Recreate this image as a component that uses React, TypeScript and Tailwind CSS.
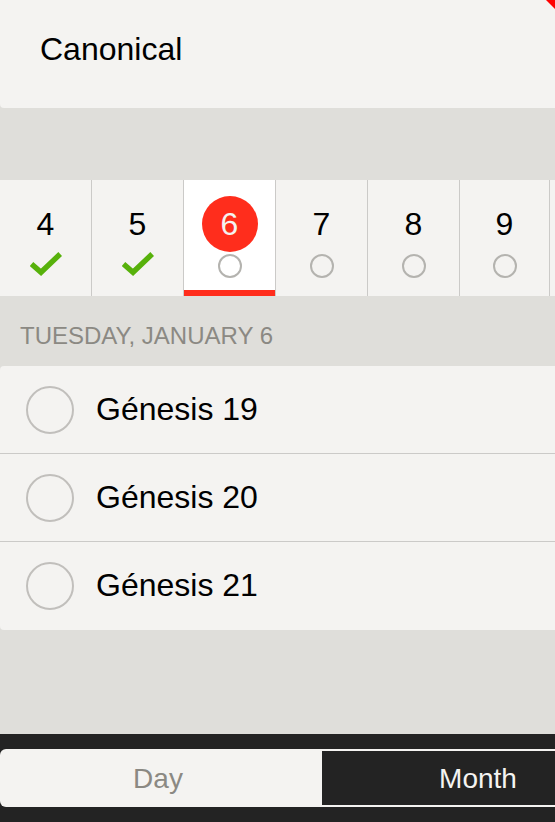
import { useState } from 'react';

type Day = { date: number; done: boolean };

const days: Day[] = [
  { date: 4, done: true },
  { date: 5, done: true },
  { date: 6, done: false },
  { date: 7, done: false },
  { date: 8, done: false },
  { date: 9, done: false },
];

const chapters = ['Génesis 19', 'Génesis 20', 'Génesis 21'];

function Check() {
  return (
    <svg viewBox="0 0 32 24" className="h-6 w-8" fill="none" aria-hidden="true">
      <path d="M1.5 12 L11 20.3 L30.2 2" stroke="#57b10b" strokeWidth="5.4" />
    </svg>
  );
}

function DayCell({ day, selected, onSelect }: { day: Day; selected: boolean; onSelect: () => void }) {
  return (
    <button
      type="button"
      aria-pressed={selected}
      onClick={onSelect}
      className={`flex w-23 shrink-0 flex-col items-center border-r border-[#cbcac8] pt-4 last:w-[90px] ${
        selected ? 'bg-white' : 'bg-[#f4f3f1]'
      }`}
    >
      <span
        className={`flex size-14 items-center justify-center rounded-full text-[32px] leading-10 ${
          selected ? 'bg-[#ff2d1c] text-[#f4f3f1]' : 'text-black'
        }`}
      >
        {day.date}
      </span>
      {day.done ? <Check /> : <span className="mt-0.5 size-6 rounded-full border-2 border-[#b4b3af]" />}
      {selected && <span className="mt-auto h-1.5 w-full bg-[#ff2d1c]" />}
    </button>
  );
}

export default function App() {
  const [selected, setSelected] = useState(6);

  return (
    <div className="flex min-h-screen flex-col overflow-hidden bg-[#dfdeda] font-['Liberation_Sans',Arial,sans-serif] text-black">
      <header className="relative overflow-hidden rounded-bl bg-[#f4f3f1] px-10 pt-[29px] pb-[39px]">
        <h1 className="text-[32px] leading-10">Canonical</h1>
        <svg viewBox="0 0 9 9" className="absolute top-0 right-0 size-[9px]" aria-hidden="true">
          <path d="M0 0H9V9Z" fill="#ff0000" />
        </svg>
      </header>

      <nav aria-label="Days" className="mt-18 flex h-29 overflow-hidden bg-[#f4f3f1]">
        <div className="flex shrink-0">
          {days.map((day) => (
            <DayCell
              key={day.date}
              day={day}
              selected={day.date === selected}
              onSelect={() => setSelected(day.date)}
            />
          ))}
        </div>
      </nav>

      <main className="flex-1">
        <h2 className="px-5 pt-[25px] pb-[15px] text-2xl leading-[30px] whitespace-nowrap text-[#8b8983]">
          TUESDAY, JANUARY 6
        </h2>
        <ul className="overflow-hidden rounded-l bg-[#f4f3f1]">
          {chapters.map((chapter) => (
            <li key={chapter} className="h-22 border-b border-[#cbcac8] last:border-b-0">
              <label className="flex items-center gap-[22px] px-[26px] pt-5 text-[32px] leading-10">
                <input
                  type="checkbox"
                  className="size-12 shrink-0 appearance-none rounded-full border-2 border-[#c1bfbc] checked:bg-[#57b10b]"
                />
                <span className="pb-0.5">{chapter}</span>
              </label>
            </li>
          ))}
        </ul>
      </main>

      <footer className="overflow-hidden bg-[#232323] py-[15px]">
        <div className="flex h-[58px] overflow-hidden rounded-l-md bg-[#f4f3f1] py-0.5 text-[28px] leading-9">
          <button type="button" className="w-[322px] shrink-0 pt-0.5 pr-1.5 text-[#8b8983]">
            Day
          </button>
          <button type="button" className="w-[312px] shrink-0 bg-[#232323] pt-0.5 text-[#f4f3f1]">
            Month
          </button>
        </div>
      </footer>
    </div>
  );
}
